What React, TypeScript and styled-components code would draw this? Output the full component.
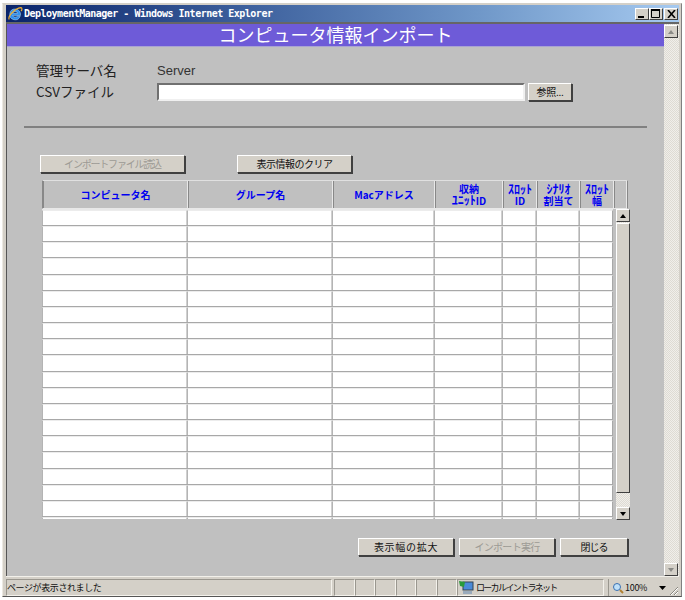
import React from "react";
import styled, { createGlobalStyle } from "styled-components";

const Global = createGlobalStyle`
  html, body { margin: 0; padding: 0; background: #fff; }
  body { font-family: "Noto Sans CJK JP", "Liberation Sans", sans-serif; }
`;

const Screen = styled.div`
  width: 685px;
  height: 600px;
  padding: 3px 3px 0 2px;
  box-sizing: border-box;
  overflow: hidden;
`;
const Win = styled.div`
  height: 594px;
  background: #d4d0c8;
  border-top: 1px solid #d4d0c8;
  border-left: 1px solid #ece9e2;
  border-right: 1px solid #808080;
  border-bottom: 1px solid #555;
  padding: 1px 2px 0 3px;
  box-sizing: border-box;
  display: flex;
  flex-direction: column;
`;
const TitleBar = styled.div`
  height: 17px;
  flex: none;
  background: linear-gradient(90deg, #0a246a 0%, #3c5f9c 35%, #6f97c8 70%, #a6caf0 100%);
  display: flex;
  align-items: center;
  padding: 0 1px 0 1px;
  gap: 1px;
`;
const TitleText = styled.span`
  flex: 1;
  color: #fff;
  font: bold 10px/15px "DejaVu Sans Mono", "Liberation Mono", monospace;
  letter-spacing: -0.5px;
  white-space: nowrap;
  margin-top: -1px;
`;
const WinControls = styled.div`
  display: flex;
  align-items: center;
`;
const WinBtn = styled.div<{ $gap?: boolean }>`
  width: 14px;
  height: 12px;
  margin-left: ${(p) => (p.$gap ? 1 : 0)}px;
  box-sizing: border-box;
  background: #d4d0c8;
  border: 1px solid;
  border-color: #fff #404040 #404040 #fff;
  display: flex;
  align-items: center;
  justify-content: center;
`;
const Viewport = styled.div`
  flex: 1;
  min-height: 0;
  display: flex;
  border-top: 2px solid #666;
  border-left: 1px solid #555;
`;
const Page = styled.div`
  flex: 1;
  min-width: 0;
  background: #c0c0c0;
  display: flex;
  flex-direction: column;
`;
const Banner = styled.div`
  height: 23px;
  flex: none;
  box-sizing: border-box;
  background: #6e5bd8;
  color: #fff;
  text-align: center;
  font-size: 18px;
  line-height: 21px;
  border-bottom: 1px solid #a9a3d3;
`;
const ServerBlock = styled.div`
  padding: 12px 0 0 29px;
  display: grid;
  grid-template-columns: 121px 371px auto;
  grid-template-rows: 21px 22px;
  justify-content: start;
  align-items: center;
  font-size: 13.5px;
  color: #222;
`;
const FieldLabel = styled.span`
  line-height: 18px;
`;
const ServerName = styled.span`
  font: 13px/18px "Liberation Sans", sans-serif;
  color: #333;
  grid-column: 2 / 4;
  padding-top: 2px;
`;
const FileInput = styled.div`
  height: 18px;
  width: 368px;
  align-self: start;
  margin-top: 3px;
  box-sizing: border-box;
  background: #fff;
  border: 2px solid;
  border-color: #707070 #f0f0f0 #f0f0f0 #707070;
`;
const Btn = styled.button<{ $w: number; $ls?: number }>`
  width: ${(p) => p.$w}px;
  height: 18px;
  box-sizing: border-box;
  padding: 0;
  background: #d4d0c8;
  border: 1px solid;
  border-color: #fff #404040 #404040 #fff;
  box-shadow: 1px 1px 0 #404040;
  font: 10px/14px "Noto Sans CJK JP", sans-serif;
  letter-spacing: ${(p) => p.$ls ?? 0}px;
  color: #111;
  white-space: nowrap;
  &:disabled {
    color: #9c9a94;
  }
`;
const BrowseBtn = styled(Btn)`
  align-self: start;
  margin-top: 3px;
`;
const Rule = styled.hr`
  margin: 24px 17px 0 17px;
  height: 2px;
  border: 0;
  background: #808080;
  flex: none;
`;
const TopActions = styled.div`
  display: flex;
  gap: 52px;
  padding: 27px 0 0 33px;
`;
const TableWrap = styled.div`
  margin: 7px 0 0 35px;
  width: 590px;
  display: flex;
  flex-direction: column;
`;
const HeaderRow = styled.div`
  display: grid;
  grid-template-columns: 145px 145px 102px 68px 34px 43px 34px 1fr;
  grid-template-rows: 1fr;
  width: 586px;
  height: 29px;
  box-sizing: border-box;
  border: 1px solid;
  border-color: #e0e0e0 #888 #e8e8e8 #888;
`;
const HeadCell = styled.div`
  display: flex;
  align-items: center;
  justify-content: center;
  text-align: center;
  color: #0000f0;
  font: bold 10px/11px "Noto Sans CJK JP", sans-serif;
  border-right: 1px solid #e8e8e8;
  border-left: 1px solid #888;
  overflow: hidden;
`;
const HalfKana = styled.span`
  font-size: 12px;
  line-height: 11px;
`;
const BodyWrap = styled.div`
  display: flex;
  gap: 3px;
  height: 312px;
`;
const Rows = styled.div`
  width: 571px;
  height: 310px;
  overflow: hidden;
  border-top: 1px solid #e8e8e8;
  box-sizing: border-box;
`;
const Row = styled.div`
  display: grid;
  grid-template-columns: 145px 145px 102px 68px 34px 43px 34px;
  height: 16.17px;
  box-sizing: border-box;
  border-bottom: 1px solid #a8a8a8;
`;
const Cell = styled.div`
  background: #fff;
  border-top: 1px solid #ececec;
  border-left: 1px solid #b4b4b4;
  border-right: 1px solid #d0d0d0;
  &:last-child { border-right: 1px solid #a8a8a8; }
`;
const Track = styled.div<{ $w: number; $h?: number }>`
  width: ${(p) => p.$w}px;
  ${(p) => (p.$h ? `height: ${p.$h}px;` : "")}
  flex: none;
  display: flex;
  flex-direction: column;
  box-sizing: border-box;
  background-image: repeating-conic-gradient(#f0eeea 0 25%, #dedbd3 0 50%);
  background-size: 2px 2px;
`;
const ScrollBtn = styled.div<{ $h: number; $mt?: number }>`
  height: ${(p) => p.$h}px;
  width: 14px;
  margin-top: ${(p) => p.$mt ?? 0}px;
  flex: none;
  box-sizing: border-box;
  background: #d4d0c8;
  border: 1px solid;
  border-color: #fff #404040 #404040 #fff;
  display: flex;
  align-items: center;
  justify-content: center;
`;
const Thumb = styled.div<{ $h: number }>`
  height: ${(p) => p.$h}px;
  width: 14px;
  margin-top: 1px;
  flex: none;
  box-sizing: border-box;
  background: #d4d0c8;
  border: 1px solid;
  border-color: #fff #404040 #404040 #fff;
`;
const Spacer = styled.div`
  flex: 1;
`;
const Arrow = styled.div<{ $down?: boolean; $muted?: boolean }>`
  width: 0;
  height: 0;
  border-left: 3.5px solid transparent;
  border-right: 3.5px solid transparent;
  ${(p) => (p.$down ? "border-top" : "border-bottom")}: 4px solid ${(p) => (p.$muted ? "#8a8a86" : "#000")};
`;
const BottomActions = styled.div`
  display: flex;
  gap: 5px;
  padding: 17px 0 0 351px;
`;
const StatusBar = styled.div`
  height: 20px;
  flex: none;
  display: grid;
  grid-template-columns: 328px repeat(6, 20.5px) 151px 1fr;
  color: #111;
  padding-top: 2px;
  box-sizing: border-box;
  border-top: 1px solid #f2f0ea;
`;
const StatusCell = styled.div<{ $mr?: number }>`
  border: 1px solid;
  border-color: #9a978f #f4f2ec #f4f2ec #9a978f;
  margin-right: ${(p) => p.$mr ?? 0}px;
  display: flex;
  align-items: center;
  white-space: pre;
  overflow: hidden;
`;
const StatusText = styled.span<{ $ls: number; $ml?: number }>`
  font-size: 9px;
  line-height: 15px;
  letter-spacing: ${(p) => p.$ls}px;
  margin-left: ${(p) => p.$ml ?? 0}px;
`;
const ZoomCell = styled.div`
  position: relative;
  display: flex;
  align-items: center;
  padding-left: 3px;
  gap: 1px;
  border-left: 1px solid #9a978f;
  white-space: nowrap;
  overflow: hidden;
`;
const ZoomArrow = styled.svg`
  margin-left: 11px;
`;
const Grip = styled.svg`
  position: absolute;
  right: 0;
  bottom: 0;
`;

const cells = [0, 1, 2, 3, 4, 5, 6];
const rows = Array.from({ length: 20 }, (_, i) => i);

export default function App() {
  return (
    <Screen>
      <Global />
      <Win>
        <TitleBar>
          <svg width="16" height="16" viewBox="0 0 16 16">
            <path d="M8.2 3a5.4 5.4 0 1 0 5 7.2h-2.9a2.7 2.7 0 0 1-4.6-.8h7.8A5.4 5.4 0 0 0 8.2 3zM5.7 7.3a2.6 2.6 0 0 1 5 0z" fill="#2f8ff0" stroke="#dff" strokeWidth=".4" />
            <path d="M2.2 13.5C.5 10.5 7.5 2.5 13.8 1.6c1.6.2 1.3 2.2.3 3.6" fill="none" stroke="#f0b030" strokeWidth="1.2" />
          </svg>
          <TitleText>DeploymentManager - Windows Internet Explorer</TitleText>
          <WinControls>
            <WinBtn>
              <svg width="8" height="8"><rect x="0" y="6" width="6" height="2" fill="#000" /></svg>
            </WinBtn>
            <WinBtn>
              <svg width="10" height="9"><path d="M.5 1.5h8v7h-8z" fill="none" stroke="#000" /><rect x="0" y="0" width="9" height="2" fill="#000" /></svg>
            </WinBtn>
            <WinBtn $gap>
              <svg width="9" height="8"><path d="M1 0l7 8M8 0L1 8" stroke="#000" strokeWidth="1.6" /></svg>
            </WinBtn>
          </WinControls>
        </TitleBar>
        <Viewport>
          <Page>
            <Banner>コンピュータ情報インポート</Banner>
            <ServerBlock>
              <FieldLabel>管理サーバ名</FieldLabel>
              <ServerName>Server</ServerName>
              <FieldLabel>CSVファイル</FieldLabel>
              <FileInput />
              <BrowseBtn $w={44} $ls={-0.3}>参照...</BrowseBtn>
            </ServerBlock>
            <Rule />
            <TopActions>
              <Btn $w={145} $ls={-1.2} disabled>インポートファイル読込</Btn>
              <Btn $w={115} $ls={-0.5}>表示情報のクリア</Btn>
            </TopActions>
            <TableWrap>
              <HeaderRow>
                <HeadCell>コンピュータ名</HeadCell>
                <HeadCell>グループ名</HeadCell>
                <HeadCell>Macアドレス</HeadCell>
                <HeadCell><span>収納<br /><HalfKana>ﾕﾆｯﾄ</HalfKana>ID</span></HeadCell>
                <HeadCell><span><HalfKana>ｽﾛｯﾄ</HalfKana><br />ID</span></HeadCell>
                <HeadCell><span><HalfKana>ｼﾅﾘｵ</HalfKana><br />割当て</span></HeadCell>
                <HeadCell><span><HalfKana>ｽﾛｯﾄ</HalfKana><br />幅</span></HeadCell>
                <HeadCell />
              </HeaderRow>
              <BodyWrap>
                <Rows>
                  {rows.map((r) => (
                    <Row key={r}>
                      {cells.map((c) => (
                        <Cell key={c} />
                      ))}
                    </Row>
                  ))}
                </Rows>
                <Track $w={14} $h={311}>
                  <ScrollBtn $h={13}><Arrow /></ScrollBtn>
                  <Thumb $h={270} />
                  <Spacer />
                  <ScrollBtn $h={13}><Arrow $down /></ScrollBtn>
                </Track>
              </BodyWrap>
            </TableWrap>
            <BottomActions>
              <Btn $w={96} $ls={0.7}>表示幅の拡大</Btn>
              <Btn $w={96} $ls={-0.7} disabled>インポート実行</Btn>
              <Btn $w={68} $ls={-1}>閉じる</Btn>
            </BottomActions>
          </Page>
          <Track $w={15}>
            <ScrollBtn $h={13} $mt={1}><Arrow $muted /></ScrollBtn>
            <Spacer />
            <ScrollBtn $h={13}><Arrow $down $muted /></ScrollBtn>
          </Track>
        </Viewport>
        <StatusBar>
          <StatusCell $mr={2}><StatusText $ls={-0.4}>ページが表示されました</StatusText></StatusCell>
          {[0, 1, 2, 3, 4, 5].map((k) => (
            <StatusCell key={k} />
          ))}
          <StatusCell $mr={4}>
            <svg width="17" height="15" viewBox="0 0 17 15">
              <rect x="5" y="2" width="10" height="8" fill="#4a8ad8" stroke="#345" />
              <path d="M1 1l6 1-1 5-4-1z" fill="#2a9a3a" />
              <path d="M5 11h9v3H5z" fill="#9ab" />
            </svg>
            <StatusText $ls={-1.7} $ml={1}>ローカル イントラネット</StatusText>
          </StatusCell>
          <ZoomCell>
            <svg width="12" height="12" viewBox="0 0 12 12">
              <circle cx="5" cy="5" r="3.5" fill="#bfe0f8" stroke="#3a70b0" />
              <path d="M8 8l3 3" stroke="#b08030" strokeWidth="2" />
            </svg>
            <StatusText $ls={-0.3}>100%</StatusText>
            <ZoomArrow width="7" height="4"><path d="M0 0h7L3.5 4z" fill="#000" /></ZoomArrow>
            <Grip width="12" height="12" viewBox="0 0 12 12">
              <path d="M11 3L3 11M11 7l-4 4" stroke="#8a877f" strokeWidth="1" />
              <path d="M11 4L4 11M11 8l-3 3" stroke="#fff" strokeWidth="1" />
            </Grip>
          </ZoomCell>
        </StatusBar>
      </Win>
    </Screen>
  );
}
